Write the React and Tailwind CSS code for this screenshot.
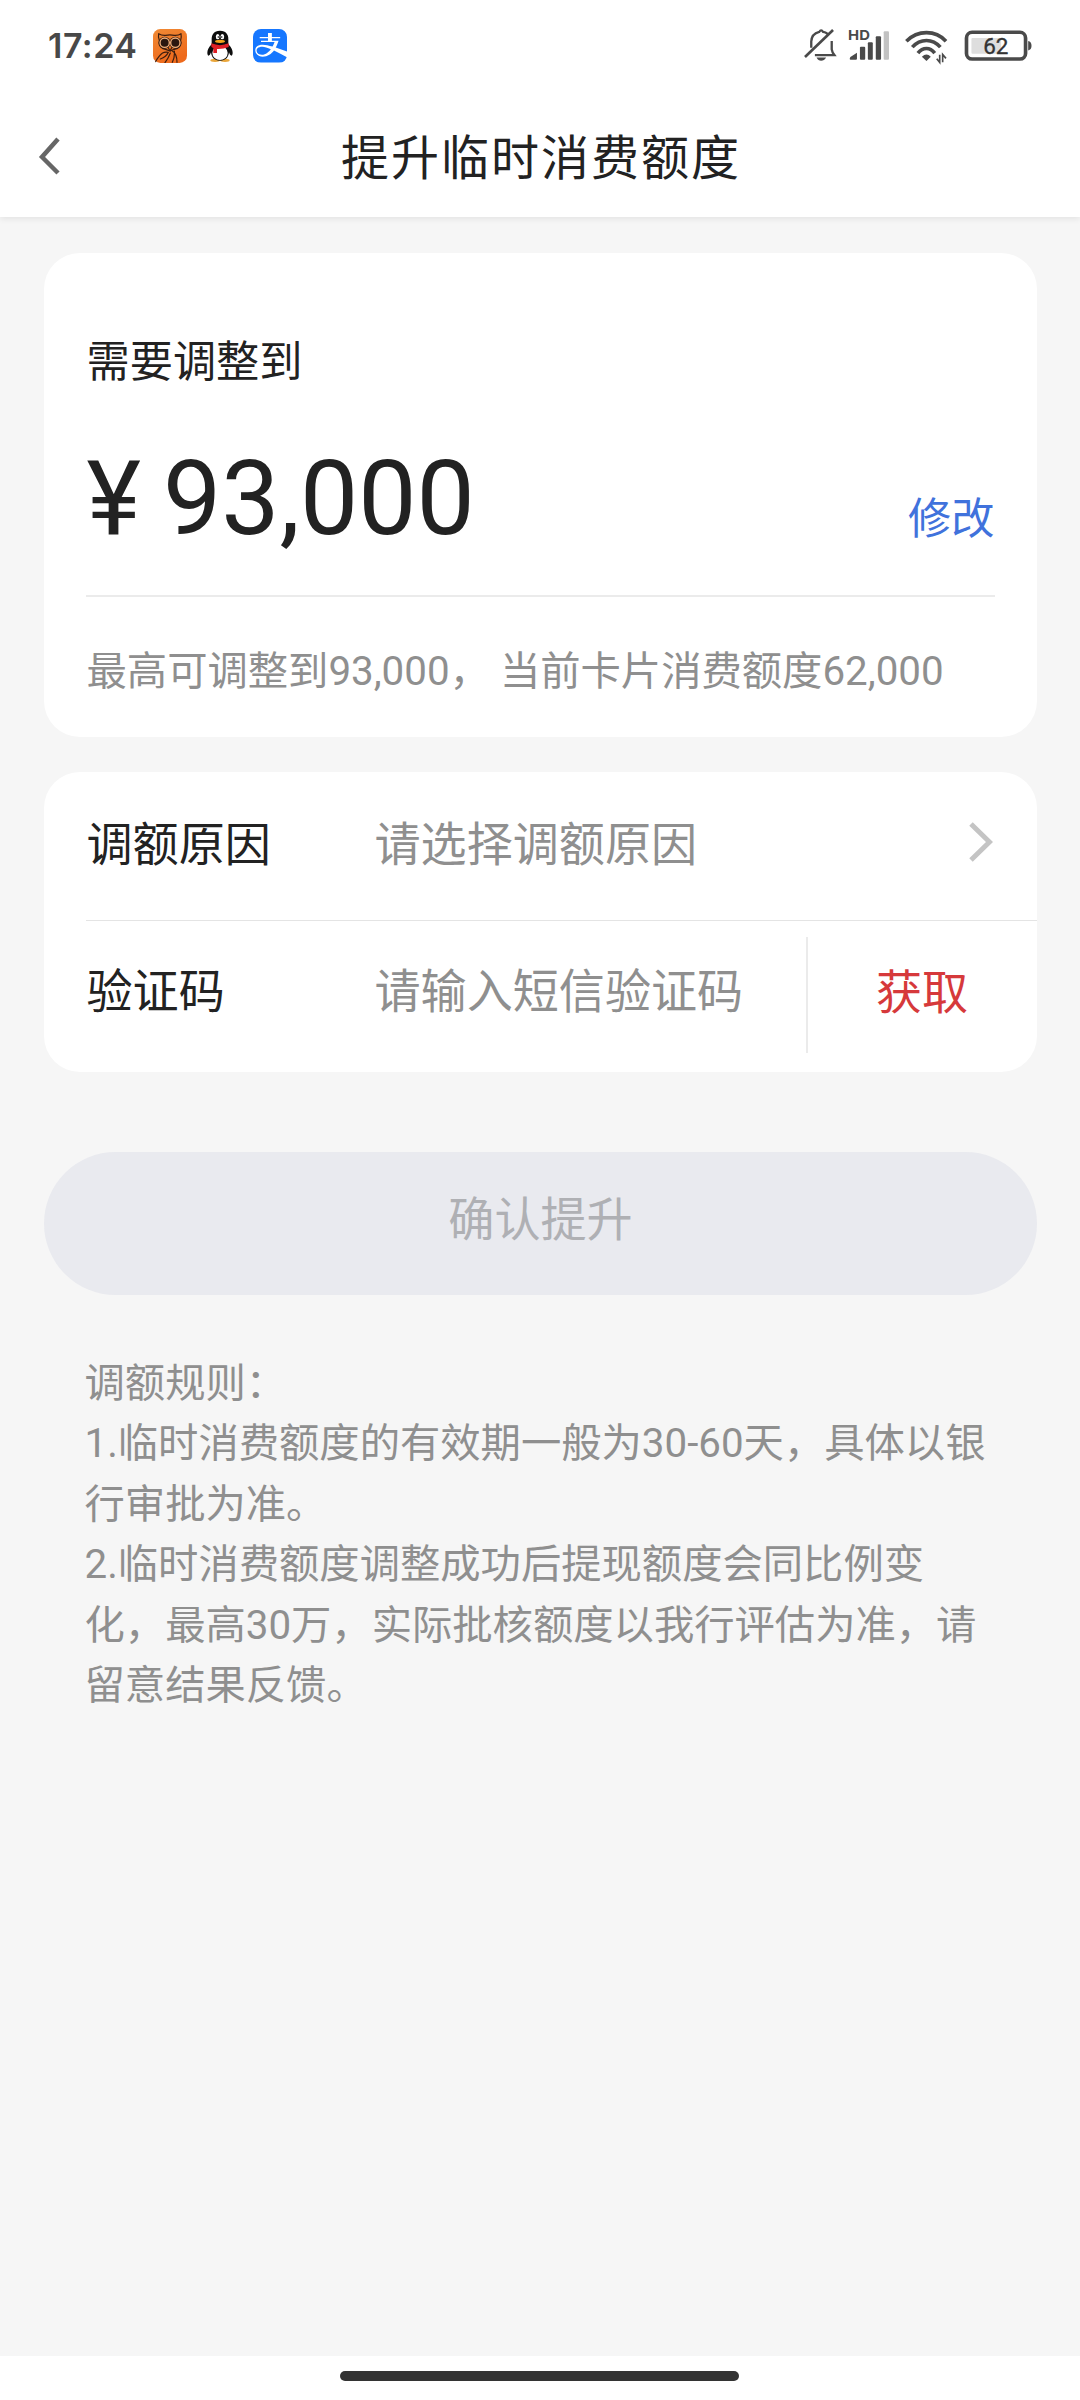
import React from "react";
import { FaAlipay } from "react-icons/fa";

const RULES = [
  "1.临时消费额度的有效期一般为30-60天，具体以银行审批为准。",
  "2.临时消费额度调整成功后提现额度会同比例变化，最高30万，实际批核额度以我行评估为准，请留意结果反馈。",
];

function OwlIcon() {
  return (
    <svg viewBox="0 0 102 102" className="h-[34px] w-[34px] shrink-0">
      <defs>
        <linearGradient id="owl" x1="0" y1="0" x2="0.4" y2="1">
          <stop offset="0" stopColor="#f08a35" />
          <stop offset="1" stopColor="#ee6a1c" />
        </linearGradient>
      </defs>
      <rect width="102" height="102" rx="22" fill="url(#owl)" />
      <g fill="none" stroke="#3a1d10" strokeWidth="3.5" strokeLinejoin="round" strokeLinecap="round">
        <path d="M17 14Q26 20 38 19Q50 16 64 19Q76 20 84 14Q86 26 83 34Q87 50 74 58Q60 62 51 66Q40 62 28 58Q15 50 19 34Q15 24 17 14Z" />
        <path d="M46 56L51 66L56 56" />
        <path d="M46 70Q30 66 20 80Q10 92 8 98M46 70Q40 84 22 90M52 72Q46 88 36 101M58 66Q72 74 72 100M64 66Q66 84 58 100" />
      </g>
      <circle cx="35" cy="41" r="18" fill="#2a1710" />
      <circle cx="67" cy="41" r="18" fill="#2a1710" />
      <g fill="none" stroke="#f3b27c" strokeWidth="4">
        <circle cx="35" cy="41" r="14" />
        <circle cx="67" cy="41" r="14" />
      </g>
    </svg>
  );
}

function QQIcon() {
  return (
    <svg viewBox="0 0 78 102" className="h-[34px] w-[26px] shrink-0">
      <ellipse cx="24" cy="94" rx="14" ry="5" fill="#eaa63a" />
      <ellipse cx="54" cy="94" rx="14" ry="5" fill="#eaa63a" />
      <path d="M14 46C-1 60 -1 76 4 80C8 80 11 74 12 70C14 86 22 95 39 95C56 95 64 86 66 70C67 74 70 80 74 80C79 76 79 60 64 46Z" fill="#0d0d0d" />
      <ellipse cx="39" cy="72" rx="23" ry="21" fill="#fff" />
      <path d="M39 5C20 5 14 18 14 30V48H64V30C64 18 58 5 39 5Z" fill="#0d0d0d" />
      <ellipse cx="32" cy="23" rx="5.5" ry="8" fill="#fff" />
      <ellipse cx="46" cy="23" rx="5.5" ry="8" fill="#fff" />
      <circle cx="34" cy="24" r="2.5" fill="#111" />
      <circle cx="44" cy="24" r="2.5" fill="#111" />
      <ellipse cx="39" cy="37" rx="15" ry="5" fill="#f4a71d" />
      <path d="M13 43Q39 54 65 43V54Q48 61 30 60V72H19V57Q15 55 13 53Z" fill="#df2026" />
    </svg>
  );
}

function BellOffIcon() {
  return (
    <svg viewBox="0 0 98 100" className="h-[33px] w-[33px] shrink-0 overflow-visible" fill="none" stroke="#4a4a4a">
      <path d="M71 15Q64 10 57 9Q54 4 51 4Q48 4 45 9Q22 15 21 38V57M83 36V62Q84 70 91 79H32" strokeWidth="7" />
      <path d="M2 85L87 3" strokeWidth="8" />
      <path d="M37 86H66Q60 96 51 96Q42 96 37 86Z" fill="#4a4a4a" stroke="none" />
    </svg>
  );
}

function SignalIcon() {
  return (
    <svg viewBox="0 0 128 100" className="h-[33px] w-[43px] shrink-0 overflow-visible">
      <text x="-1" y="33" className="font-['Inter'] text-[41px] font-bold" textLength="66" lengthAdjust="spacingAndGlyphs" fill="#4a4a4a">HD</text>
      <g fill="#4a4a4a">
        <path d="M4 90Q4 84 12 81L26 72V90Q26 93 23 93H7Q4 93 4 90Z" />
        <rect x="35" y="54" width="16" height="39" rx="3" />
        <rect x="59" y="40" width="15" height="53" rx="3" />
        <rect x="83" y="22" width="16" height="71" rx="3" />
      </g>
      <rect x="107" y="7" width="16" height="86" rx="3" fill="#c2c2c2" />
    </svg>
  );
}

function WifiIcon() {
  return (
    <svg viewBox="0 0 130 100" className="h-[33px] w-[43px] shrink-0 overflow-visible">
      <g fill="none" stroke="#4a4a4a" strokeWidth="11">
        <path d="M4 37Q30 11 65 11Q100 11 124 37" />
        <path d="M22 55Q40 35 65 35Q89 35 107 55" />
        <path d="M39 73Q50 59 65 59Q79 59 90 73" />
      </g>
      <path d="M51 84Q65 71 78 84L65 97Z" fill="#4a4a4a" />
      <path d="M105 78V101L96 90M114 101V77L124 89" fill="none" stroke="#4a4a4a" strokeWidth="5" />
    </svg>
  );
}

function BatteryIcon() {
  return (
    <svg viewBox="0 0 206 100" className="h-[33px] w-[69px] shrink-0">
      <rect x="6" y="10" width="179" height="81" rx="17" fill="none" stroke="#4a4a4a" strokeWidth="11" />
      <rect x="21" y="27" width="90" height="48" rx="3" fill="#dedede" />
      <path d="M193 36Q203 38 203 51Q203 63 193 65Z" fill="#4a4a4a" />
      <text x="95" y="76" textAnchor="middle" className="font-['Roboto'] text-[68px]" fill="#333" stroke="#333" strokeWidth="1">62</text>
    </svg>
  );
}

function StatusBar() {
  return (
    <div className="flex h-[90px] items-center justify-between pt-px pr-[47px] pl-[48px]">
      <div className="flex items-center">
        <span className="w-[105px] font-['Inter'] text-[34px] leading-none font-semibold tracking-[0.5px] text-[#484848]">17:24</span>
        <OwlIcon />
        <div className="w-5" />
        <QQIcon />
        <div className="ml-5 flex h-[34px] w-[34px] items-center justify-center overflow-hidden rounded-lg bg-white">
          <FaAlipay className="h-[39px] w-[34px] shrink-0 text-[#1677ff]" />
        </div>
      </div>
      <div className="flex items-center">
        <BellOffIcon />
        <div className="w-[11px]" />
        <SignalIcon />
        <div className="w-[14px]" />
        <WifiIcon />
        <div className="w-[16px]" />
        <BatteryIcon />
      </div>
    </div>
  );
}

function Header() {
  return (
    <div className="grid h-[127px] grid-cols-[100px_1fr_100px] items-center">
      <svg viewBox="0 0 24 56" className="mt-1 ml-[38px] h-14 w-6" fill="none" stroke="#666" strokeWidth="4.5">
        <path d="M20 11L4 29L20 45" />
      </svg>
      <h1 className="mt-2.5 pl-0.5 text-center text-[48px] leading-[72px] tracking-[2px] text-[#222]">提升临时消费额度</h1>
    </div>
  );
}

function AmountCard() {
  return (
    <section className="h-[484px] rounded-[36px] bg-white px-[42px]">
      <p className="pt-[78px] pl-px text-[43.2px] leading-[64px] text-[#222]">需要调整到</p>
      <div className="flex h-[202px] items-end justify-between border-b-2 border-[#ebebeb]">
        <div className="mb-[36px] ml-px flex text-[103.68px] leading-[120px] text-[#222]">
          <span>¥</span>
          <span className="ml-[22px]">93,000</span>
        </div>
        <button className="mb-[43px] text-[43.2px] leading-[64px] text-[#4072dc]">修改</button>
      </div>
      <p className="pt-[45px] pl-px text-[40.32px] leading-[60px] whitespace-pre text-[#8f8f8f]">最高可调整到93,000， 当前卡片消费额度62,000</p>
    </section>
  );
}

function FormCard() {
  return (
    <section className="mt-[35px] h-[300px] rounded-[36px] bg-white pl-[42px] text-[46.08px] leading-[64px]">
      <div className="flex h-[149px] items-center border-b border-[#e4e4e4] pr-11 pb-[3px] pl-px">
        <span className="w-[288px] text-[#222]">调额原因</span>
        <span className="flex-1 text-[#8f8f8f]">请选择调额原因</span>
        <svg viewBox="0 0 24 40" className="-mt-1.5 h-10 w-6" fill="none" stroke="#c4c4c4" strokeWidth="5">
          <path d="M2 2L20.500 20L2 38" />
        </svg>
      </div>
      <div className="flex h-[151px] items-start pt-4 pl-px">
        <span className="w-[288px] pt-[23px] text-[#222]">验证码</span>
        <span className="flex-1 pt-[23px] text-[#8f8f8f]">请输入短信验证码</span>
        <div className="flex h-[116px] w-[231px] items-center justify-center border-l-2 border-[#ebebeb] pb-1 text-[#d6393b]">获取</div>
      </div>
    </section>
  );
}

export default function App() {
  return (
    <div className="flex h-[2400px] w-[1080px] flex-col overflow-hidden bg-[#f6f6f6] font-['Roboto','Noto_Sans_CJK_SC',sans-serif]">
      <header className="bg-white shadow-[0_2px_6px_rgba(0,0,0,0.08)]">
        <StatusBar />
        <Header />
      </header>

      <main className="flex-1 px-[43.5px] pt-9">
        <AmountCard />
        <FormCard />
        <button className="mt-20 flex h-[143px] w-full items-center justify-center rounded-full bg-[#e9eaef] pb-1.5 pl-px text-[46.08px] text-[#afb0b4]">
          确认提升
        </button>

        {/* Rules */}
        <div className="mt-[59px] w-[950px] pl-[41px] text-[40.32px] leading-[60.48px] text-[#8f8f8f]">
          <p>调额规则：</p>
          {RULES.map((rule) => (
            <p key={rule}>{rule}</p>
          ))}
        </div>
      </main>

      <footer className="flex h-11 justify-center bg-white pt-[15px] pr-px">
        <div className="h-2.5 w-[399px] rounded-full bg-[#333]" />
      </footer>
    </div>
  );
}
